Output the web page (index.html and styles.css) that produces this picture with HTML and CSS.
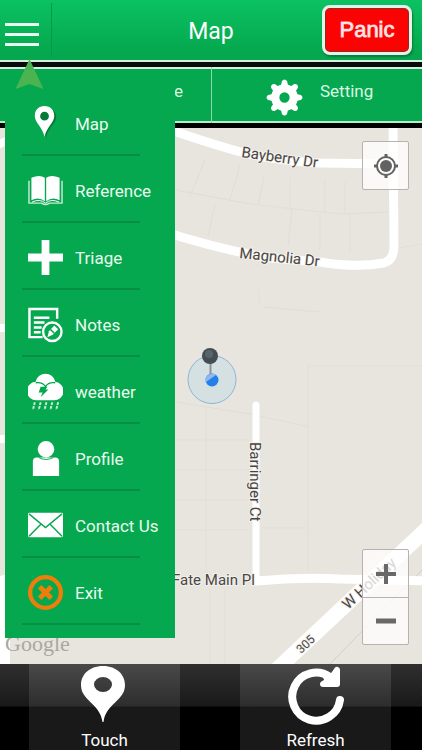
FILE: index.html
```html
<!DOCTYPE html>
<html lang="en">
<head>
<meta charset="utf-8">
<meta name="viewport" content="width=device-width, initial-scale=1">
<title>Map</title>
<link rel="stylesheet" href="styles.css">
</head>
<body>
<div class="app">
  <header class="header">
    <button class="menu-toggle" type="button" aria-label="Menu"><span></span><span></span><span></span></button>
    <h1 class="title">Map</h1>
    <button class="panic" type="button">Panic</button>
  </header>

  <div class="tabs">
    <button class="tab tab-reference" type="button">Reference</button>
    <button class="tab tab-setting" type="button">
      <svg class="gear" viewBox="0 0 36 36" aria-hidden="true">
        <g fill="#fff">
          <g id="teeth"><path d="M14 9 15.500 2Q18-1 20.500 2L22 9ZM14 27 15.500 34Q18 37 20.500 34L22 27Z"/></g>
          <use href="#teeth" transform="rotate(45 18 18)"/>
          <use href="#teeth" transform="rotate(90 18 18)"/>
          <use href="#teeth" transform="rotate(135 18 18)"/>
        </g>
        <circle cx="18" cy="18" r="9" fill="none" stroke="#fff" stroke-width="8"/>
      </svg>
      <span>Setting</span>
    </button>
  </div>

  <main class="map">
    <svg class="map-canvas" viewBox="0 128 422 536" preserveAspectRatio="xMidYMid slice" role="img" aria-label="Street map">
      <rect y="128" width="422" height="536" fill="#e8e4de"/>
      <g fill="none" stroke="#e2ded7" stroke-width="1">
        <path d="M176 190 250 204 340 214 392 212M205 160 190 196M240 165 230 200M264 176 258 205M290 178V210M325 180V213M345 182V214M215 204 208 236M292 210 288 246M320 214V250M350 214V252M398 248 422 244"/>
        <path d="M259 290V306M264 307 320 312M308 366V570M308 366H422M176 402 250 414 310 427M206 406V574M176 440H250M176 470H250M176 500H250M176 530H250M262 528H308M210 590V664M225 590V664"/>
        <path d="M422 570 330 664" stroke="#d2cec7"/>
      </g>
      <g fill="none" stroke="#fff" stroke-linecap="round" stroke-linejoin="round">
        <path stroke-width="9" d="M165 128 Q205 142 237 151 T320 163L393 164M393 120 394 246Q394 260 384 263 355 268 320 262 L270 258Q222 250 165 232"/>
        <path stroke-width="7" d="M256 405V581"/>
        <path stroke-width="9" d="M256 581 Q300 577 340 579L430 581"/>
        <path stroke-width="15" d="M272 674 432 524"/>
        <path stroke-width="8" d="M-4 146 8 140M-4 328H8M-4 439H8"/>
        <path stroke-width="12" d="M4 581V674"/>
      </g>
      <circle cx="212" cy="379.500" r="24" fill="#cfdfe2" fill-opacity=".8" stroke="#8db6d8"/>
      <path d="M210.500 360V378" stroke="#8a9499" stroke-width="2"/>
      <circle cx="212" cy="380" r="6.500" fill="#247fe6"/>
      <path d="M206 382A6.500 6.500 0 0 1 216 375Z" fill="#8fb8f3"/>
      <circle cx="210" cy="356" r="8" fill="#454d54"/>
      <circle cx="209" cy="354" r="4" fill="#59636b"/>
      <g class="street">
        <text transform="translate(241 157) rotate(8)">Bayberry Dr</text>
        <text transform="translate(239 258) rotate(6)">Magnolia Dr</text>
        <text transform="translate(250 442) rotate(90)">Barringer Ct</text>
        <text x="172" y="585">Fate Main Pl</text>
        <text transform="translate(348 610) rotate(-43)">W Holiday</text>
        <text class="route" transform="translate(301 654) rotate(-43)">305</text>
      </g>
      <text class="google" x="5" y="651">Google</text>
    </svg>

    <button class="locate" type="button" aria-label="My location">
      <svg viewBox="0 0 26 26" aria-hidden="true"><g fill="none" stroke="#626262" stroke-width="2"><circle cx="13" cy="13" r="9"/><path stroke-width="3" d="M13 1V5M13 21V25M1 13H5M21 13H25"/></g><circle cx="13" cy="13" r="6" fill="#626262"/></svg>
    </button>
    <div class="zoom">
      <button type="button" aria-label="Zoom in"><svg viewBox="0 0 20 20" aria-hidden="true"><path d="M10 0V20M0 10H20" stroke="#686868" stroke-width="4"/></svg></button>
      <button type="button" aria-label="Zoom out"><svg viewBox="0 0 20 20" aria-hidden="true"><path d="M0 10H20" stroke="#686868" stroke-width="5"/></svg></button>
    </div>
  </main>

  <footer class="actions">
    <button class="action" type="button">
      <svg viewBox="0 0 60 60" aria-hidden="true"><path fill="#fff" fill-rule="evenodd" d="M28 0C14 0 6 9 6 19 6 35 25 37 27.500 56H28.500C31 37 50 35 50 19 50 9 42 0 28 0ZM28 11A9 7.500 0 1 1 28 26 9 7.500 0 1 1 28 11Z"/></svg>
      <span>Touch</span>
    </button>
    <button class="action" type="button">
      <svg viewBox="0 0 60 60" aria-hidden="true"><g fill="none" stroke="#fff" stroke-linecap="round"><path stroke-width="8" d="M54 34A24 24 0 1 1 44 11"/><path fill="#fff" stroke-width="6" stroke-linejoin="round" d="M51 4V18H37L42 15 40 11 46 11Z"/></g></svg>
      <span>Refresh</span>
    </button>
  </footer>

  <nav class="menu" aria-label="Main">
    <svg class="menu-arrow" viewBox="0 0 28 30" aria-hidden="true"><path d="M14 0 28 30 14 25 0 30Z" fill="#4bb450"/></svg>
    <ul>
      <li><a href="#map"><svg viewBox="0 0 36 36" aria-hidden="true"><path fill="#067a39" fill-rule="evenodd" d="M18 1C12 1 9 5 9 10 9 18 17 22 18.500 33 20 22 30 18 29 10 28 5 24 1 18 1Z"/><path fill="#fff" fill-rule="evenodd" d="M17 0C11 0 7 4 7 10 7 18 15 21 17 32 19 21 27 18 27 10 27 4 23 0 17 0ZM17 6A4.500 4.500 0 1 1 17 15 4.500 4.500 0 1 1 17 6Z"/></svg>Map</a></li>
      <li><a href="#reference"><svg viewBox="0 0 36 36" aria-hidden="true"><path d="M1 8V31H14Q18 34 22 31H35V8" fill="none" stroke="#c9e9d5" stroke-width="1.500"/><path fill="#fff" d="M3.500 5Q12 1 17.300 5V29Q11 24 3.500 28ZM32.500 5Q24 1 18.700 5V29Q25 24 32.500 28Z"/><path d="M4 30Q12 26 18 31 24 26 32 30" stroke="#fff" fill="none"/></svg>Reference</a></li>
      <li><a href="#triage"><svg viewBox="0 0 36 36" aria-hidden="true"><path fill="#fff" d="M14 0H22V14H36V22H22V36H14V22H0V14H14Z"/></svg>Triage</a></li>
      <li><a href="#notes"><svg viewBox="0 0 36 36" aria-hidden="true"><g fill="none" stroke="#fff" stroke-width="2.500"><path d="M30 12V2H1.500V31H15M6 11H22M6 16H17M6 21H14M6 26H13"/><circle cx="25" cy="25.500" r="9.500"/></g><path fill="#fff" d="M20 31 21.500 25 27 19 31 23 25.500 28.500Z"/><path d="M23 23 27 27" stroke="#05a84e" stroke-width="1.500"/></svg>Notes</a></li>
      <li><a href="#weather"><svg viewBox="0 0 36 38" aria-hidden="true"><path fill="#fff" d="M8 9C10-2 26-2 28 9A9.500 9.500 0 0 1 26 28H9A9.500 9.500 0 0 1 8 9Z"/><path d="M8 10Q15 9 18 14 21 9 28 10" fill="none" stroke="#05a84e" stroke-width="1.300"/><path fill="#05a84e" d="M13 14H20L18 17H21L13 25 15 20H11Z"/><path d="M7 30 5 38M13 30 11 38M19 30 17 38M25 30 23 38M31 30 29 38" stroke="#cdebd9" stroke-width="2" stroke-dasharray="3 1"/></svg>weather</a></li>
      <li><a href="#profile"><svg viewBox="0 0 36 36" aria-hidden="true"><circle cx="18.500" cy="8.500" r="8.500" fill="#fff"/><path fill="#fff" d="M5 36V21Q5 17 9 17H28Q32 17 32 21V36Z"/><path d="M11 17Q18.500 21 26 17" stroke="#05a84e" fill="none"/></svg>Profile</a></li>
      <li><a href="#contact"><svg viewBox="0 0 36 36" aria-hidden="true"><rect y="5" width="36" height="25" rx="1.500" fill="#fff"/><path d="M1 6 18 20 35 6M1 29 13 17M35 29 23 17" fill="none" stroke="#05a84e" stroke-width="1.500"/></svg>Contact Us</a></li>
      <li><a href="#exit"><svg viewBox="0 0 36 36" aria-hidden="true"><circle cx="18" cy="18" r="15.800" fill="none" stroke="#ef7d0b" stroke-width="4.400"/><path d="M12 12 24 24M24 12 12 24" stroke="#ef7d0b" stroke-width="5"/></svg>Exit</a></li>
    </ul>
  </nav>
</div>
</body>
</html>
```
FILE: styles.css
```css
* {
  box-sizing: border-box;
}

body {
  margin: 0;
  font-family: Roboto, "Liberation Sans", sans-serif;
  color: #fff;
}

button {
  margin: 0;
  padding: 0;
  border: 0;
  background: none;
  color: inherit;
  font: inherit;
}

svg {
  display: block;
}

.app {
  position: relative;
  display: flex;
  flex-direction: column;
  min-height: 100vh;
  overflow: hidden;
}

.header {
  display: grid;
  grid-template-columns: 1fr auto 1fr;
  align-items: center;
  height: 62px;
  padding-right: 10px;
  background: linear-gradient(#0bc262, #05a84e 85%);
  border-bottom: 2px solid #d5f0e0;
}

.menu-toggle {
  display: flex;
  flex-direction: column;
  justify-content: center;
  gap: 7px;
  width: 52px;
  height: 54px;
  padding: 8px 12px 0 5px;
  border-right: 1px solid #07994a;
}

.menu-toggle span {
  height: 3px;
  background: #e9fff2;
}

.title {
  margin: 4px 0 0 10px;
  font-size: 23px;
  font-weight: 400;
  line-height: 28px;
}

.panic {
  justify-self: end;
  width: 90px;
  height: 50px;
  border: 3px solid #e4f3e9;
  border-radius: 8px;
  background: #fb0303;
  box-shadow: inset 0 0 0 1px #8f2b22, 1px 2px 2px #087c3d;
  color: #ffe6e6;
  font-family: "Liberation Sans", sans-serif;
  font-size: 22px;
  -webkit-text-stroke: 1px #ffb9b9;
  paint-order: stroke;
}

.tabs {
  display: grid;
  grid-template-columns: 1fr 1fr;
  height: 66px;
  border-top: 5px solid #0b0b0b;
  border-bottom: 5px solid #000;
  background: #05a84e;
  box-shadow: inset 0 2px #d5f0e0, inset 0 -2px #b9ebcc;
}

.tab {
  font-size: 17px;
  line-height: 20px;
  color: #dcf7e6;
}

.tab-reference {
  padding: 0 28px 8px 0;
  text-align: right;
}

.tab-setting {
  display: flex;
  align-items: center;
  gap: 17px;
  padding-left: 54px;
  border-left: 1px solid #8bd9ab;
}

.tab-setting span {
  padding-bottom: 8px;
}

.gear {
  width: 37px;
  height: 37px;
  margin-top: 4px;
}

.map {
  position: relative;
  flex: 1;
  min-height: 400px;
  background: #e8e4de;
}

.map-canvas {
  position: absolute;
  inset: 0;
  width: 100%;
  height: 100%;
}

.street {
  font-size: 15px;
  fill: #484643;
  stroke: #f3f0ec;
  stroke-width: 2px;
  paint-order: stroke;
}

.street .route {
  font-size: 12px;
}

.google {
  font-family: "Liberation Serif", serif;
  font-size: 22px;
  fill: #aaa7a3;
}

.locate,
.zoom {
  position: absolute;
  right: 13px;
  width: 47px;
  border: 1px solid #b5b3b0;
  border-radius: 2px;
  background: rgba(255, 255, 255, 0.78);
}

.locate {
  top: 13px;
  height: 49px;
}

.locate svg {
  width: 26px;
  height: 26px;
  margin: 0 auto;
}

.zoom {
  bottom: 19px;
}

.zoom button {
  display: block;
  width: 100%;
  height: 47px;
}

.zoom button + button {
  border-top: 1px solid #b5b3b0;
}

.zoom svg {
  width: 20px;
  height: 20px;
  margin: 0 auto;
}

.actions {
  display: flex;
  height: 86px;
  background: linear-gradient(#2f2f2f, #191919 49%, #000 50%);
}

.action {
  flex: 1;
  display: flex;
  flex-direction: column;
  align-items: center;
  margin: 0 31px 0 29px;
  background: linear-gradient(#494949, #2d2d2d 49%, #191919 50%);
  font-size: 17px;
  line-height: 20px;
}

.action svg {
  width: 60px;
  height: 60px;
  margin-top: 2px;
  margin-bottom: 4px;
}

.menu {
  position: absolute;
  top: 71px;
  left: 5px;
  width: 170px;
  padding: 18px 0 13px;
  background: #05a84e;
}

.menu-arrow {
  position: absolute;
  top: -12px;
  left: 10px;
  width: 29px;
  height: 30px;
}

.menu ul {
  margin: 0;
  padding: 0;
  list-style: none;
}

.menu li {
  width: 118px;
  height: 67px;
  margin-left: 17px;
  border-bottom: 2px solid #068f43;
}

.menu a {
  display: flex;
  align-items: center;
  gap: 12px;
  height: 100%;
  padding: 4px 0 0 6px;
  color: #e9fbf0;
  font-size: 17px;
  line-height: 20px;
  text-decoration: none;
  white-space: nowrap;
}

.menu a svg {
  flex: none;
  width: 35px;
  height: 37px;
}
```
